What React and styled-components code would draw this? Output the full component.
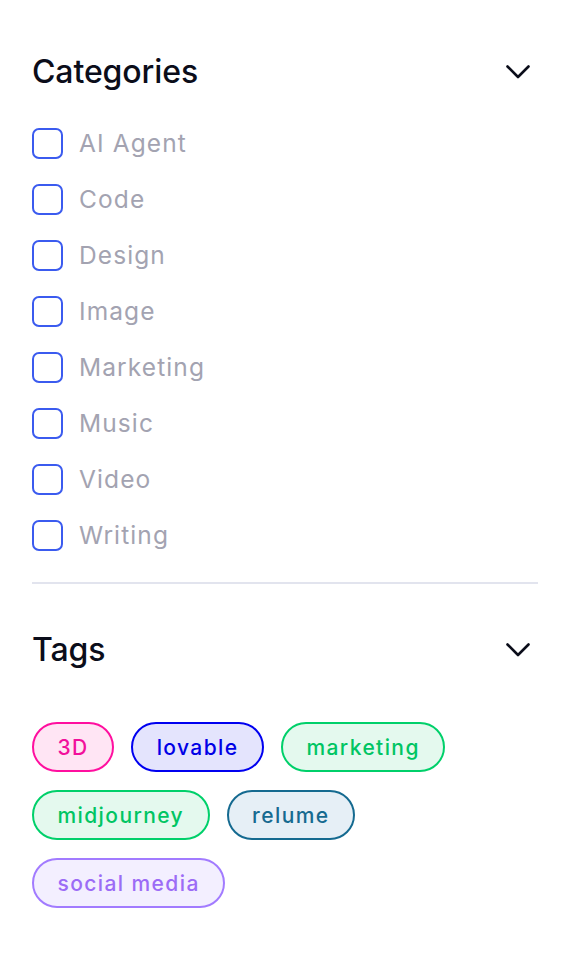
import React from "react";
import styled, { createGlobalStyle } from "styled-components";

const Global = createGlobalStyle`
  html, body { margin: 0; padding: 0; background: #ffffff; }
  body { font-family: Inter, "Noto Sans", sans-serif; }
`;

const Panel = styled.aside`
  width: 564px;
  box-sizing: border-box;
  padding: 52px 26px 40px 32px;
  display: flex;
  flex-direction: column;
`;

const Section = styled.section`
  display: flex;
  flex-direction: column;
`;

const Header = styled.div`
  display: flex;
  align-items: center;
  justify-content: space-between;
  height: 40px;
  padding-right: 7px;
`;

const Title = styled.h2`
  margin: 0;
  font-family: Inter, sans-serif;
  font-weight: 500;
  font-size: 32px;
  line-height: 40px;
  color: #0b0d1a;
  letter-spacing: -0.1px;
`;

const List = styled.ul`
  list-style: none;
  margin: 35px 0 0;
  padding: 0;
  display: flex;
  flex-direction: column;
  gap: 24px;
`;

const Row = styled.li`
  display: flex;
  align-items: center;
  gap: 16px;
  height: 32px;
`;

const Box = styled.span`
  width: 31px;
  height: 31px;
  box-sizing: border-box;
  border: 2.5px solid #3b5bef;
  border-radius: 7px;
  flex: none;
`;

const Label = styled.span`
  font-family: Inter, sans-serif;
  font-size: 24.5px;
  color: #a3a3b1;
  letter-spacing: 1.1px;
`;

const Divider = styled.hr`
  border: none;
  height: 2px;
  background: #e2e4ee;
  margin: 31px 0 46px;
`;

const Tags = styled.div`
  display: flex;
  flex-wrap: wrap;
  gap: 18px 17px;
  margin-top: 52px;
`;

const Tag = styled.span`
  box-sizing: border-box;
  height: 50px;
  display: inline-flex;
  align-items: center;
  padding: 0 23.5px;
  border: 2px solid ${(p) => p.$border};
  background: ${(p) => p.$bg};
  color: ${(p) => p.$fg};
  border-radius: 999px;
  font-family: Inter, sans-serif;
  font-weight: 500;
  font-size: 21px;
  letter-spacing: 1.4px;
`;

const Chevron = () => (
  <svg width="26" height="16" viewBox="0 0 26 16" fill="none">
    <polyline
      points="2.5,2.5 13,13 23.5,2.5"
      stroke="#0b0d1a"
      strokeWidth="2.6"
      strokeLinecap="round"
      strokeLinejoin="round"
    />
  </svg>
);

const categories = ["AI Agent", "Code", "Design", "Image", "Marketing", "Music", "Video", "Writing"];

const tags = [
  { name: "3D", border: "#ff0f9f", bg: "#ffe5f4", fg: "#f2109b" },
  { name: "lovable", border: "#0000f0", bg: "#e4e4fd", fg: "#0000e6" },
  { name: "marketing", border: "#00d06a", bg: "#e4f9ee", fg: "#00c563" },
  { name: "midjourney", border: "#00d06a", bg: "#e4f9ee", fg: "#00c563" },
  { name: "relume", border: "#156a90", bg: "#e6eff6", fg: "#166a90" },
  { name: "social media", border: "#a27bff", bg: "#f3efff", fg: "#9c6cf6" },
];

export default function App() {
  return (
    <>
      <Global />
      <Panel>
        <Section>
          <Header>
            <Title>Categories</Title>
            <Chevron />
          </Header>
          <List>
            {categories.map((c) => (
              <Row key={c}>
                <Box />
                <Label>{c}</Label>
              </Row>
            ))}
          </List>
        </Section>
        <Divider />
        <Section>
          <Header>
            <Title>Tags</Title>
            <Chevron />
          </Header>
          <Tags>
            {tags.map((t) => (
              <Tag key={t.name} $border={t.border} $bg={t.bg} $fg={t.fg}>
                {t.name}
              </Tag>
            ))}
          </Tags>
        </Section>
      </Panel>
    </>
  );
}
